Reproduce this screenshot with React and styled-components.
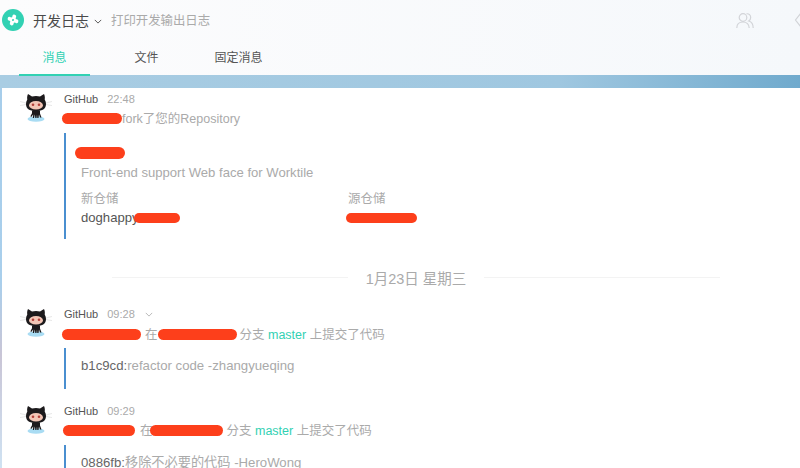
import React from "react";
import styled, { createGlobalStyle } from "styled-components";

const GlobalStyle = createGlobalStyle`
  html, body {
    margin: 0;
    padding: 0;
    height: 100%;
    overflow: hidden;
    background: #fff;
    font-family: "Liberation Sans", "Noto Sans CJK SC", sans-serif;
  }
`;

const Page = styled.div`
  width: 800px;
  height: 468px;
  overflow: hidden;
  display: flex;
  flex-direction: column;
  background: linear-gradient(180deg, #a6cdea 0%, #a9cfec 60%, #c9c5d6 76%, #cfe2f2 100%);
`;

const Header = styled.header`
  height: 75px;
  flex: none;
  background: linear-gradient(90deg, #fcfcfd 0%, #f5f8fb 100%);
`;

const TitleRow = styled.div`
  display: flex;
  align-items: center;
  height: 40px;
  padding-left: 2px;
`;

const Logo = styled.div`
  width: 22px;
  height: 22px;
  border-radius: 50%;
  background: #32d1b3;
  display: flex;
  align-items: center;
  justify-content: center;
  margin-right: 9px;
`;

const Title = styled.div`
  font-size: 14px;
  color: #4a4a4a;
`;

const Caret = styled.svg`
  width: 8px;
  height: 5px;
  margin: 2px 9px 0 5px;
`;

const MetaCaret = styled(Caret)`
  margin: 1px 0 0 10px;
`;

const Subtitle = styled.div`
  font-size: 12.4px;
  color: #aaa;
  flex: 1;
`;

const HeadIcons = styled.div`
  display: flex;
  align-items: center;
  gap: 40px;
  margin-right: -4px;
`;

const Tabs = styled.nav`
  display: flex;
  padding-left: 19px;
`;

const Tab = styled.div`
  width: ${(p) => p.$w}px;
  margin-right: ${(p) => p.$gap || 0}px;
  height: 36px;
  box-sizing: border-box;
  padding-top: 8px;
  text-align: center;
  font-size: 12px;
  color: ${(p) => (p.$active ? "#32d1b3" : "#555")};
  border-bottom: 2px solid ${(p) => (p.$active ? "#32d1b3" : "transparent")};
  position: relative;
  z-index: 1;
`;

const Band = styled.div`
  height: 13px;
  flex: none;
  background: linear-gradient(90deg, #a9cde3 0%, #9fc7e0 70%, #70aacd 100%);
`;

const Feed = styled.main`
  flex: 1;
  margin-left: 2px;
  background: #fff;
  padding-top: 3px;
`;

const Message = styled.article`
  display: flex;
  margin-bottom: ${(p) => p.$mb || 0}px;
`;

const AvatarBox = styled.div`
  width: 62px;
  flex: none;
  padding: 1px 0 0 17px;
  box-sizing: border-box;
`;

const Body = styled.div`
  flex: 1;
  min-width: 0;
`;

const Meta = styled.div`
  display: flex;
  align-items: center;
  height: 16px;
  font-size: 11px;
  color: #555;
`;

const Time = styled.span`
  margin-left: 9px;
  color: #aaa;
`;

const Line = styled.div`
  margin-top: ${(p) => p.$mt || 2}px;
  height: 20px;
  line-height: 20px;
  font-size: 12.5px;
  color: #aaa;
  white-space: nowrap;
`;

const Scribble = styled.span`
  display: inline-block;
  width: ${(p) => p.$w}px;
  height: ${(p) => p.$h || 11}px;
  margin-left: ${(p) => p.$ml || 0}px;
  margin-right: ${(p) => p.$mr || 0}px;
  border-radius: 6px;
  background: #fd3f1b;
  vertical-align: -1px;
`;

const Link = styled.span`
  color: #32d1b3;
`;

const Quote = styled.div`
  margin-top: ${(p) => p.$mt || 4}px;
  border-left: 2px solid #4a8fd0;
  height: ${(p) => p.$h}px;
  box-sizing: border-box;
  padding-left: 15px;
`;

const RepoName = styled.div`
  height: 18px;
  padding-top: 11px;
`;

const Description = styled.div`
  margin-top: 1px;
  font-size: 13.1px;
  line-height: 20px;
  color: #aaa;
`;

const RepoGrid = styled.div`
  display: grid;
  grid-template-columns: 267px 1fr;
  margin-top: 7px;
`;

const RepoLabel = styled.div`
  font-size: 12.5px;
  line-height: 18px;
  color: #aaa;
`;

const RepoValue = styled.div`
  font-size: 13.1px;
  line-height: 20px;
  color: #555;
  white-space: nowrap;
`;

const DateDivider = styled.div`
  display: flex;
  align-items: center;
  justify-content: center;
  gap: 18px;
  height: 20px;
  margin: 28px 0 19px;
  padding-left: 30px;
  font-size: 14.5px;
  color: #aaa;
  &::before,
  &::after {
    content: "";
    width: 236px;
    height: 1px;
    background: #f3f3f3;
  }
`;

const Commit = styled.div`
  font-size: 13.2px;
  line-height: 20px;
  padding-top: 8px;
  color: #aaa;
  white-space: nowrap;
  b {
    font-weight: normal;
    color: #666;
  }
`;

const Octocat = () => (
  <svg width="34" height="32" viewBox="-2 0 34 32">
    <ellipse cx="15" cy="27" rx="8.500" ry="2.800" fill="#a9dcf3" />
    <path d="M-1 9.500q4 .8 7 2M-1 13.500q4-.5 7-1.200M31 9.500q-4 .8-7 2M31 13.500q-4-.5-7-1.200" stroke="#ddd" strokeWidth="0.7" fill="none" />
    <path
      d="M7 2l4 2.500c2.600-.7 5.400-.7 8 0L23 2c1 2 1 4 .7 5.500 .9 1.500 1.300 3 1.300 4.500 0 4.500-3 7-10 7S5 16.500 5 12c0-1.500.4-3 1.300-4.500C6 6 6 4 7 2z"
      fill="#1c1a1c"
    />
    <ellipse cx="15" cy="13.200" rx="7" ry="4.300" fill="#f3c6b6" />
    <circle cx="12" cy="12.700" r="1.300" fill="#b3403a" />
    <circle cx="18" cy="12.700" r="1.300" fill="#b3403a" />
    <path
      d="M11 18.500h8v3l1.500 4h-1.500l-1-3-.5 3.500h-1.200l-.3-3.500-.5 3.500h-1.200l-.4-3.500-.9 3.500h-1.200l.4-3.500-2 2.500-.8-.7 1.600-3z"
      fill="#1c1a1c"
    />
  </svg>
);

const PeopleIcon = () => (
  <svg width="18" height="15" viewBox="0 0 18 15" fill="none" stroke="#d2d4d8" strokeWidth="1.200">
    <circle cx="7" cy="4.500" r="3.800" />
    <path d="M.8 15c0-3.800 2.500-6 6.200-6s6.200 2.200 6.200 6" />
    <path d="M10.500 .8c2.500-.4 4.200 1.400 4.200 3.600 0 1.500-.8 2.900-2 3.600 2.800.8 4.500 3.200 4.500 7" />
  </svg>
);

const EdgeIcon = () => (
  <svg width="10" height="16" viewBox="0 0 10 16" fill="none" stroke="#d2d4d8" strokeWidth="1.200">
    <path d="M7 1L1.500 8 7 15" />
  </svg>
);

const GearMark = () => (
  <svg width="12" height="12" viewBox="0 0 12 12" fill="#fff">
    <g transform="rotate(20 6 6)">
      <circle cx="6" cy="2.400" r="2" />
      <circle cx="2.400" cy="6" r="2" />
      <circle cx="9.600" cy="6" r="2" />
      <circle cx="6" cy="9.600" r="2" />
      <circle cx="6" cy="6" r="3" />
      <circle cx="6" cy="6" r="1" fill="#32d1b3" />
    </g>
  </svg>
);

const App = () => (
  <Page>
    <GlobalStyle />
    <Header>
      <TitleRow>
        <Logo>
          <GearMark />
        </Logo>
        <Title>开发日志</Title>
        <Caret viewBox="0 0 10 6" fill="none" stroke="#555" strokeWidth="1.200">
          <path d="M1 1l4 4 4-4" />
        </Caret>
        <Subtitle>打印开发输出日志</Subtitle>
        <HeadIcons>
          <PeopleIcon />
          <EdgeIcon />
        </HeadIcons>
      </TitleRow>
      <Tabs>
        <Tab $w={71} $gap={21} $active>消息</Tab>
        <Tab $w={71} $gap={21}>文件</Tab>
        <Tab $w={71}>固定消息</Tab>
      </Tabs>
    </Header>
    <Band />
    <Feed>
      <Message>
        <AvatarBox><Octocat /></AvatarBox>
        <Body>
          <Meta>GitHub<Time>22:48</Time></Meta>
          <Line><Scribble $w={60} $ml={-2} />fork了您的Repository</Line>
          <Quote $h={106}>
            <RepoName><Scribble $w={50} $ml={-6} $h={12} /></RepoName>
            <Description>Front-end support Web face for Worktile</Description>
            <RepoGrid>
              <div>
                <RepoLabel>新仓储</RepoLabel>
                <RepoValue>doghappy<Scribble $w={46} $ml={-5} $h={10} /></RepoValue>
              </div>
              <div>
                <RepoLabel>源仓储</RepoLabel>
                <RepoValue><Scribble $w={71} $ml={-2} $h={10} /></RepoValue>
              </div>
            </RepoGrid>
          </Quote>
        </Body>
      </Message>
      <DateDivider>1月23日 星期三</DateDivider>
      <Message $mb={14}>
        <AvatarBox><Octocat /></AvatarBox>
        <Body>
          <Meta>
            GitHub<Time>09:28</Time>
            <MetaCaret viewBox="0 0 10 6" fill="none" stroke="#aaa" strokeWidth="1">
              <path d="M1 1l4 4 4-4" />
            </MetaCaret>
          </Meta>
          <Line $mt={3}>
            <Scribble $w={79} $ml={-2} $mr={4} />在<Scribble $w={79} $mr={3} />分支 <Link>master</Link> 上提交了代码
          </Line>
          <Quote $h={41} $mt={3}>
            <Commit><b>b1c9cd:</b>refactor code -zhangyueqing</Commit>
          </Quote>
        </Body>
      </Message>
      <Message>
        <AvatarBox><Octocat /></AvatarBox>
        <Body>
          <Meta>GitHub<Time>09:29</Time></Meta>
          <Line>
            <Scribble $w={72} $ml={-1} $mr={5} />在<Scribble $w={73} $ml={-3} $mr={4} />分支 <Link>master</Link> 上提交了代码
          </Line>
          <Quote $h={41}>
            <Commit><b>0886fb:</b>移除不必要的代码 -HeroWong</Commit>
          </Quote>
        </Body>
      </Message>
    </Feed>
  </Page>
);

export default App;
